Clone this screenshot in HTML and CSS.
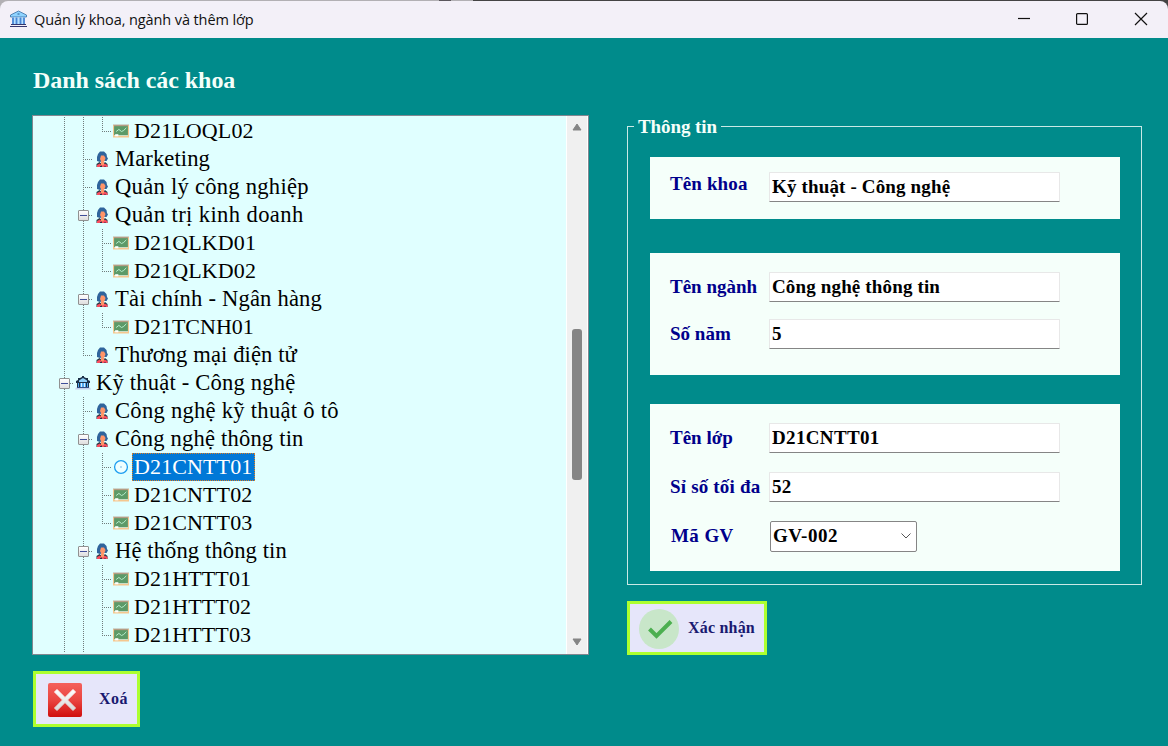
FILE: index.html
```
<!DOCTYPE html>
<html lang="vi">
<head>
<meta charset="utf-8">
<title>Quản lý khoa, ngành và thêm lớp</title>
<link rel="stylesheet" href="styles.css">
</head>
<body>
<svg class="defs" aria-hidden="true">
  <defs>
    <linearGradient id="red" x1="0" y1="0" x2="0" y2="1"><stop offset="0" stop-color="#f4605c"/><stop offset=".5" stop-color="#ea4440"/><stop offset="1" stop-color="#d00e0e"/></linearGradient>
    <linearGradient id="white" x1="0" y1="0" x2="0" y2="1"><stop offset="0" stop-color="#fff"/><stop offset="1" stop-color="#d8d8d8"/></linearGradient>
    <symbol id="person" viewBox="0 0 16 16">
      <path d="M3 10V6l1-3 2-2.500h4L12.500 3l.5 3 1 1.500-1.500 2.500H9L6 11z" fill="#2f649c"/>
      <path d="M7 4.500h3l1.500 2.500-1 3-1 1H7.500L6 8z" fill="#ff9468"/>
      <path d="M2.500 16v-3l3-2 3 2.500 2.500-2.500 2.500 2v3z" fill="#263743"/>
      <path d="M3 16v-2l3-1.500L8 15l2.500-2.500 3 1.500v2h-2v-1h-1v1H8v-1H6v1z" fill="#fa4c5e"/>
      <path d="M7 10.500h3v3L8.500 15 7 13.500z" fill="#ff9468"/>
    </symbol>
    <symbol id="board" viewBox="0 0 15 13">
      <path d="M0 .5h15V10H0z" fill="#b49c84"/>
      <path d="M1 2h13v8.500H1z" fill="#5c9a68"/>
      <path d="M0 11h15v1.500H0zM0 1h1v10H0zM14 1h1v10h-1z" fill="#f5c78f"/>
      <path d="M3 7l2.500-2L8 7l2-1 2.500-2.500" fill="none" stroke="#b9f0cf" stroke-width=".9"/>
      <path d="M2 9.500h3v2H2z" fill="#fff"/>
    </symbol>
    <symbol id="bank" viewBox="0 0 16 14">
      <path d="M7 0h2v1l2 1h2v2l2 1v2h-1v5H2V7H1V5l2-1V2h2l2-1z" fill="#1c3048"/>
      <path d="M4 4.500L8 2l4 2.500V6H4z" fill="#8fd0fa"/>
      <path d="M3 7h10v4.500H3z" fill="#4fa7ee"/>
      <path d="M4.500 7v4M11.500 7v4" stroke="#1c3048"/>
      <path d="M6.500 7v5M9.500 7v5" stroke="#d9efff"/>
      <path d="M1 11.500h14l1 2H0z" fill="#c5d1ec"/>
      <path d="M2 11.500h12" stroke="#344f86"/>
    </symbol>
    <symbol id="focus" viewBox="0 0 15 15">
      <circle cx="7.500" cy="7.500" r="6" fill="#efffff" stroke="#1c9df0" stroke-width="1.200"/>
      <path d="M7 7h1v1H7z" fill="#1c80d0"/>
    </symbol>
  </defs>
</svg>
<div class="window">
  <header class="titlebar">
    <svg class="app-icon" viewBox="0 0 18 18">
      <path d="M1 5l8-4 8 4v2H1z" fill="#8fd3ff" stroke="#3a6ea5" stroke-width=".8"/>
      <path d="M2.500 7.500h13v7h-13z" fill="#b4e0ff"/>
      <path d="M3.500 7.500v7M7 7.500v7M11 7.500v7M14.500 7.500v7" stroke="#4a86d4" stroke-width="1.800"/>
      <path d="M8 4h2" stroke="#2b5b94"/>
      <path d="M1.500 14.500h15M.5 16.500h17" stroke="#34356e" stroke-width="1.200"/>
    </svg>
    <h1 class="caption">Quản lý khoa, ngành và thêm lớp</h1>
    <div class="controls">
      <svg viewBox="0 0 14 14"><path d="M2 6.500h12"/></svg>
      <svg viewBox="0 0 14 14"><rect x="1.600" y="1.600" width="10.800" height="10.800" rx="1"/></svg>
      <svg viewBox="0 0 14 14"><path d="M1 1l12 12M13 1L1 13"/></svg>
    </div>
  </header>
  <main class="content">
    <section class="left">
      <h2 class="heading">Danh sách các khoa</h2>
      <div class="tree">
        <ul class="nodes">
          <li class="node"><i class="v"></i><i class="v"></i><i class="last"></i><svg class="icon"><use href="#board"/></svg><span class="label code">D21LOQL02</span></li>
          <li class="node"><i class="v"></i><i class="mid"></i><svg class="icon"><use href="#person"/></svg><span class="label plain">Marketing</span></li>
          <li class="node"><i class="v"></i><i class="mid"></i><svg class="icon"><use href="#person"/></svg><span class="label">Quản lý công nghiệp</span></li>
          <li class="node"><i class="v"></i><i class="mid"><b class="toggle"></b></i><svg class="icon"><use href="#person"/></svg><span class="label loose">Quản trị kinh doanh</span></li>
          <li class="node"><i class="v"></i><i class="v"></i><i class="mid"></i><svg class="icon"><use href="#board"/></svg><span class="label code">D21QLKD01</span></li>
          <li class="node"><i class="v"></i><i class="v"></i><i class="last"></i><svg class="icon"><use href="#board"/></svg><span class="label code">D21QLKD02</span></li>
          <li class="node"><i class="v"></i><i class="mid"><b class="toggle"></b></i><svg class="icon"><use href="#person"/></svg><span class="label snug">Tài chính - Ngân hàng</span></li>
          <li class="node"><i class="v"></i><i class="v"></i><i class="last"></i><svg class="icon"><use href="#board"/></svg><span class="label plain code">D21TCNH01</span></li>
          <li class="node"><i class="v"></i><i class="last"></i><svg class="icon"><use href="#person"/></svg><span class="label plain">Thương mại điện tử</span></li>
          <li class="node"><i class="mid"><b class="toggle"></b></i><svg class="icon"><use href="#bank"/></svg><span class="label snug">Kỹ thuật - Công nghệ</span></li>
          <li class="node"><i class="v"></i><i class="mid"></i><svg class="icon"><use href="#person"/></svg><span class="label">Công nghệ kỹ thuật ô tô</span></li>
          <li class="node"><i class="v"></i><i class="mid"><b class="toggle"></b></i><svg class="icon"><use href="#person"/></svg><span class="label snug">Công nghệ thông tin</span></li>
          <li class="node"><i class="v"></i><i class="v"></i><i class="mid"></i><svg class="icon"><use href="#focus"/></svg><span class="label code selected">D21CNTT01</span></li>
          <li class="node"><i class="v"></i><i class="v"></i><i class="mid"></i><svg class="icon"><use href="#board"/></svg><span class="label code">D21CNTT02</span></li>
          <li class="node"><i class="v"></i><i class="v"></i><i class="last"></i><svg class="icon"><use href="#board"/></svg><span class="label code">D21CNTT03</span></li>
          <li class="node"><i class="v"></i><i class="mid"><b class="toggle"></b></i><svg class="icon"><use href="#person"/></svg><span class="label plain">Hệ thống thông tin</span></li>
          <li class="node"><i class="v"></i><i class="v"></i><i class="mid"></i><svg class="icon"><use href="#board"/></svg><span class="label code">D21HTTT01</span></li>
          <li class="node"><i class="v"></i><i class="v"></i><i class="mid"></i><svg class="icon"><use href="#board"/></svg><span class="label code">D21HTTT02</span></li>
          <li class="node"><i class="v"></i><i class="v"></i><i class="last"></i><svg class="icon"><use href="#board"/></svg><span class="label code">D21HTTT03</span></li>
          <li class="node"><i class="v"></i><i class="v"></i></li>
        </ul>
        <div class="scrollbar">
          <svg class="arrow" viewBox="0 0 10 8"><path d="M5 1l4 6H1z"/></svg>
          <div class="thumb"></div>
          <svg class="arrow" viewBox="0 0 10 8"><path d="M5 7l4-6H1z"/></svg>
        </div>
      </div>
      <button class="button delete">
        <svg class="delete-icon" viewBox="0 0 34 34"><rect width="34" height="34" rx="2" fill="url(#red)"/><path d="M6.500 9L9 6.500l8 8 8-8L27.500 9l-8 8 8 8-2.500 2.500-8-8-8 8L6.500 25l8-8z" fill="url(#white)" stroke="url(#white)" stroke-linejoin="round"/></svg>
        <span>Xoá</span>
      </button>
    </section>
    <section class="right">
      <div class="group">
        <h3 class="legend">Thông tin</h3>
        <div class="panel faculty">
          <label class="field"><span class="name">Tên khoa</span><input class="input" value="Kỹ thuật - Công nghệ"></label>
        </div>
        <div class="panel major">
          <label class="field"><span class="name">Tên ngành</span><input class="input" value="Công nghệ thông tin"></label>
          <label class="field"><span class="name">Số năm</span><input class="input" value="5"></label>
        </div>
        <div class="panel class">
          <label class="field"><span class="name">Tên lớp</span><input class="input wide" value="D21CNTT01"></label>
          <label class="field"><span class="name capacity">Sỉ số tối đa</span><input class="input" value="52"></label>
          <div class="field"><span class="name teacher">Mã GV</span><div class="select"><span>GV-002</span><svg class="chevron" viewBox="0 0 10 6"><path d="M.5.5L5 5 9.500.5"/></svg></div></div>
        </div>
      </div>
      <button class="button confirm">
        <svg class="confirm-icon" viewBox="0 0 40 40"><circle cx="20" cy="20" r="20" fill="#c8e6c9"/><path d="M10.500 20l7 7L32 12.500" fill="none" stroke="#4caf50" stroke-width="4"/></svg>
        <span>Xác nhận</span>
      </button>
    </section>
  </main>
</div>
</body>
</html>
```
FILE: styles.css
```
* { box-sizing: border-box; }
body { margin: 0; background: #4a4a4a; font-family: "Liberation Serif", "Times New Roman", serif; }
.defs { position: absolute; width: 0; height: 0; }
.window { width: 1168px; height: 746px; padding-top: 1px; background: linear-gradient(90deg, #b2b0b4 439px, #5a565c 439px 451px, #b2b0b4 451px 473px, #444 473px); background-size: 100% 30px; background-repeat: no-repeat; }
.titlebar { height: 37px; display: flex; align-items: center; padding: 0 0 1px 9px; background: #f3f0f8; border-radius: 8px 8px 0 0; }
.app-icon { width: 19px; height: 18px; margin-right: 6px; }
.caption { margin: 0; padding-top: 1px; font: 400 14.500px/20px "Open Sans", "Noto Sans", sans-serif; letter-spacing: -.1px; color: #111; white-space: nowrap; }
.controls { margin-left: auto; display: flex; gap: 45px; padding-right: 20px; }
.controls svg { width: 14px; height: 14px; fill: none; stroke: #111; stroke-width: 1.200; }
.content { height: 708px; display: flex; align-items: flex-start; background: #008b8b; padding-left: 32px; }
.left { width: 595px; }
.heading { margin: 0; padding: 28px 0 0 1px; height: 77px; font-size: 24px; line-height: 28px; letter-spacing: -.06px; color: #f5fffa; }
.tree { width: 557px; height: 540px; display: flex; justify-content: space-between; border: 1px solid #828790; background: #e0ffff; overflow: hidden; }
.nodes { margin: 0; padding: 1px 0 0 22px; height: 536px; overflow: hidden; list-style: none; }
.node { display: flex; height: 28px; align-items: center; }
.node i { width: 19px; height: 28px; display: flex; align-items: center; background-repeat: no-repeat;
  --dots-v: repeating-linear-gradient(180deg, #707c7c 0 1px, transparent 1px 2px);
  --dots-h: repeating-linear-gradient(90deg, #707c7c 0 1px, transparent 1px 2px); }
.v { background-image: var(--dots-v); background-size: 1px 28px; background-position: 9px 0; }
.mid { background-image: var(--dots-v), var(--dots-h); background-size: 1px 28px, 10px 1px; background-position: 9px 0, 9px 14px; }
.last { background-image: var(--dots-v), var(--dots-h); background-size: 1px 15px, 10px 1px; background-position: 9px 0, 9px 14px; }
.toggle { width: 11px; height: 11px; margin-left: 4px; border: 1px solid #919191; border-radius: 1px; background: linear-gradient(#3f4e98, #3f4e98) center / 7px 1px no-repeat, linear-gradient(#fff, #dedede); }
.icon { width: 16px; height: 16px; margin: 0 3px 0 1px; }
.label { height: 28px; padding: 0 2px; font-size: 22.600px; line-height: 27px; color: #000; white-space: nowrap; letter-spacing: .26px; }
.snug { letter-spacing: .18px; }
.loose { letter-spacing: .38px; }
.plain { letter-spacing: .1px; }
.code { font-size: 22px; letter-spacing: .12px; }
.plain.code { letter-spacing: 0; }
.selected { padding-right: 3px; color: #fff; background: #0078d7; outline: 1px dotted #e08020; outline-offset: -1px; }
.scrollbar { width: 22px; display: flex; flex-direction: column; align-items: center; background: #f0f0f0; border-left: 1px solid #fff; border-right: 1px solid #fff; padding: 7px 0 8px; }
.arrow { width: 10px; height: 8px; fill: #858585; stroke: #858585; stroke-linejoin: round; flex: none; margin-right: 1px; }
.thumb { width: 10px; height: 151px; margin: 198px 0 auto; border-radius: 3px; background: #858585; }
.button { display: flex; align-items: center; border: 3px solid #adff2f; background: #e6e6fa; color: #191970; font: 700 16px/20px "Liberation Serif", serif; white-space: nowrap; letter-spacing: .2px; }
.delete { width: 107px; height: 56px; margin: 16px 0 0 1px; padding: 2px 0 0 12px; gap: 17px; letter-spacing: .5px; }
.delete span { padding-bottom: 2px; }
.delete-icon { width: 34px; height: 34px; }
.right { width: 515px; padding-top: 88px; }
.group { position: relative; height: 459px; padding: 30px 22px 0; border: 1px solid #c9e9e6; }
.legend { position: absolute; left: 6px; top: -12px; margin: 0; padding: 0 4px; background: #008b8b; color: #f5fffa; font-size: 19px; line-height: 24px; letter-spacing: -.08px; white-space: nowrap; }
.panel { width: 470px; background: #f5fffa; padding: 15px 0 0 20px; display: flex; flex-direction: column; }
.faculty { height: 62px; }
.major { height: 122px; margin-top: 34px; padding-top: 19px; gap: 17px; }
.class { height: 167px; margin-top: 29px; padding-top: 19px; gap: 19px; }
.field { display: flex; height: 30px; align-items: center; }
.name { width: 99px; color: #00008b; font-size: 19px; font-weight: 700; line-height: 22px; white-space: nowrap; }
.capacity { letter-spacing: .18px; }
.teacher { letter-spacing: .4px; padding-left: 1px; }
.faculty .name { padding-bottom: 6px; letter-spacing: .12px; }
.input { width: 291px; height: 30px; padding: 0 2px; border: 1px solid #e8e8e8; border-bottom-color: #858585; border-radius: 1px; background: #fff; color: #000; font: 700 19px/26px "Liberation Serif", serif; letter-spacing: .15px; }
.wide { letter-spacing: .35px; }
.select { width: 147px; height: 31px; margin-left: 1px; display: flex; align-items: center; justify-content: space-between; padding: 0 5px 1px 2px; border: 1px solid #858585; border-radius: 2px; background: #fff; font-size: 19px; font-weight: 700; line-height: 26px; letter-spacing: .5px; }
.chevron { width: 10px; height: 6px; fill: none; stroke: #555; }
.confirm { width: 140px; height: 54px; margin-top: 16px; padding: 0 0 0 9px; gap: 9px; }
.confirm-icon { width: 40px; height: 40px; margin-top: 2px; }
```
